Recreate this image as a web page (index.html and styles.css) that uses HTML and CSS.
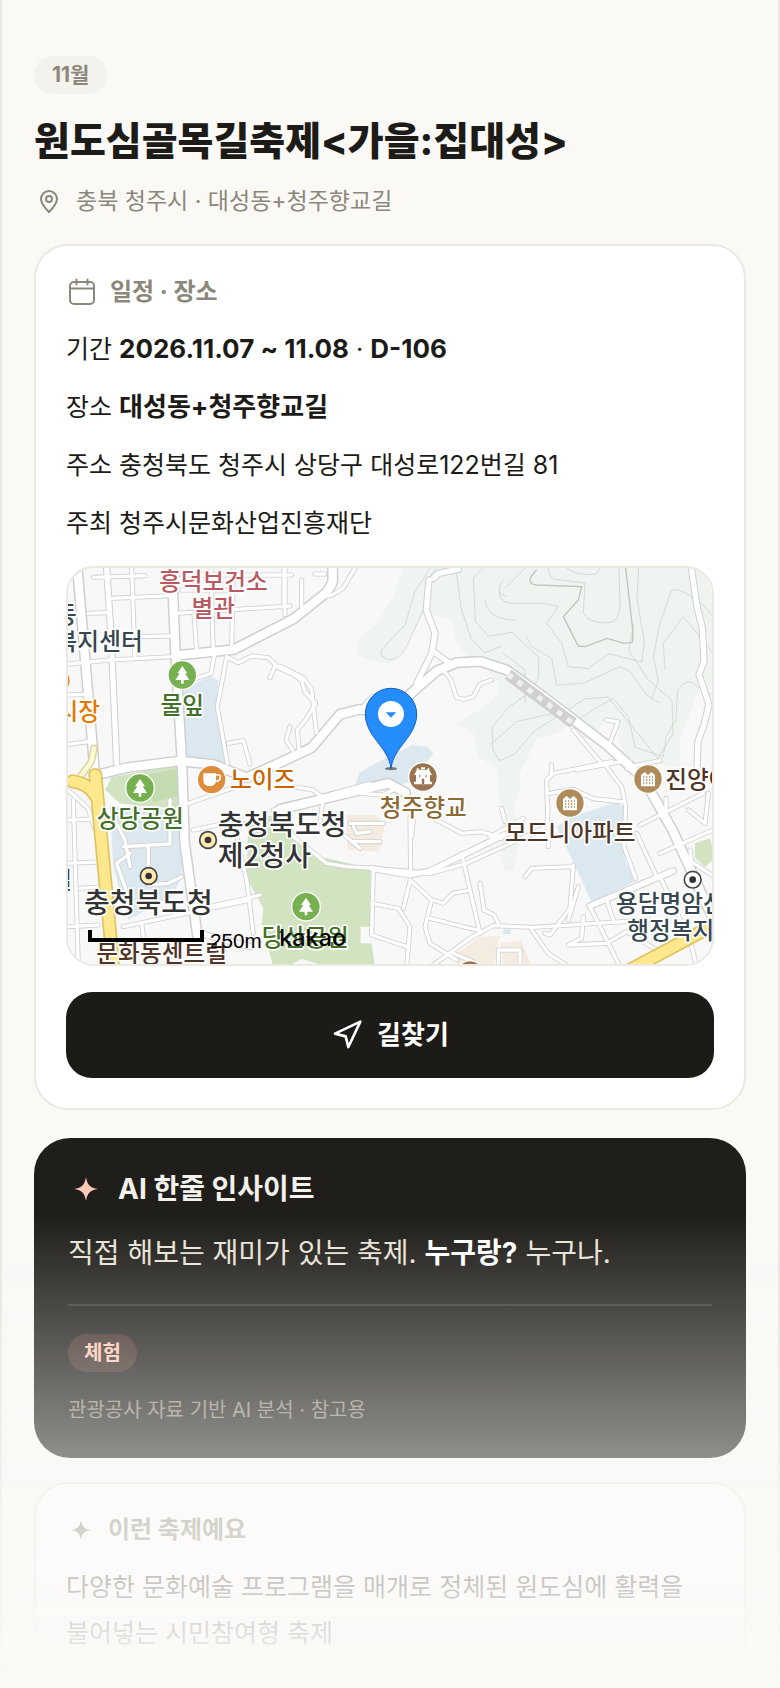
FILE: index.html
```html
<!DOCTYPE html>
<html lang="ko">
<head>
<meta charset="utf-8">
<meta name="viewport" content="width=device-width, initial-scale=1">
<title>원도심골목길축제&lt;가을:집대성&gt;</title>
<link rel="stylesheet" href="styles.css">
</head>
<body>
<main class="page">
  <header class="intro">
    <span class="month">11월</span>
    <h1 class="title">원도심골목길축제&lt;가을:집대성&gt;</h1>
    <p class="location">
      <svg class="icon-pin" viewBox="0 0 24 24" aria-hidden="true"><path d="M20 10c0 5-5 10-8 13-3-3-8-8-8-13a8 8 0 0 1 16 0z"/><circle cx="12" cy="10" r="3"/></svg>
      <span>충북 청주시 · 대성동+청주향교길</span>
    </p>
  </header>

  <section class="card">
    <h2 class="card-head">
      <svg class="icon-calendar" viewBox="0 0 28 28" aria-hidden="true"><rect x="2" y="4" width="24" height="22" rx="4"/><path d="M2 10.500h24M8.500 1.500v5M19.500 1.500v5"/></svg>
      <span>일정 · 장소</span>
    </h2>
    <div class="rows">
      <p>기간 <strong>2026.11.07 ~ 11.08</strong> · <strong>D-106</strong></p>
      <p>장소 <strong>대성동+청주향교길</strong></p>
      <p>주소 충청북도 청주시 상당구 대성로122번길 81</p>
      <p>주최 청주시문화산업진흥재단</p>
    </div>
    <div class="map">
      <svg class="map-svg" viewBox="24 24 1932 1188" role="img" aria-label="대성동+청주향교길 지도">
        <defs>
          <g id="minor">
            <path d="M215 24l10 270M100 52l155-5M155 115l180-8M85 160l60-2M245 230l85-2M24 312l125-12 190-10M24 405l50-2M24 553l60-8M350 160l340-22M402 160l8 115M455 24v110l5 140M520 24l-5 240M672 24v120M365 45h330M365 90h150"/>
            <path d="M465 275l-12 65-45 15M500 290l-28 150 30 170M500 290l35 18 40-20 50 5 30 30 40 18 30 20 10 35 32 34-30 50-25 30 5 60M660 318l70 35 25 35 14 130M645 318l-15 35M505 550l45-8 20 70M690 500l-12 40 20 30"/>
            <path d="M725 60v80M765 42h30M885 24l-35 60-35 22-15 2M675 24v140M900 450l35-40 60-16"/>
            <path d="M1295 360l-35 12-20 38-28 8-22-5-18-55-20-25"/>
            <path d="M1640 480l34 6-28 72M1540 510l80 95M1710 620l90-18M1550 630l150-28M1474 615v30"/>
            <path d="M1700 626l10-20M1465 860l-5-200 20-20 175-35M1470 700l70-12 60 28 90 10M1640 620l45 60 12 60-5 120 35 95M1818 715v50M1740 795l190-95M1945 700l-10 90-50-40M1800 880l170-75M1730 820l60 130M1890 870l5 35 60 40M1395 950l20-25 120-5M1540 915l-10 130-60 80-15-5"/>
            <path d="M1465 740l-5 60-240 110-110 30-170-15M1325 745l10 40M1050 770l2 170M1120 775l85 45 60-5 60 20M1290 830l100-55"/>
            <path d="M1205 880l55 240M1260 490M1050 960l65 60-20 80 15 50 80 50M1110 1075l60 15 80 20M1120 1020l30 10 28-30 45-8M1260 970l12 80 30 15 15 30"/>
            <path d="M940 925l-5 200 105 35M935 1030l80 15 35 55-10 120M1050 965l-20 80M1120 1215l110-80 70-38 120 5 350-22M1315 1215v-45h65v50M1415 1110l50 70 60 40M1240 1205l-60-25"/>
            <path d="M1590 1040l90 180M1595 1035l240-105M1640 1020l20 60M1570 1070l-5 65-40 20M1530 1155l110-5 60-35 90 55M1555 980l-30 100M1800 950l90 190 20 80"/>
            <path d="M385 730l145-50M400 810l240-50M640 750l290-80M24 690l60 55 20 60M24 780l80-3M40 720l15 500M24 910l110-5M60 985l80-5M24 1100l90-5M165 780l30 60 15 80M190 860l140-8V720M265 860v85M210 880l-40 30 35 100M365 950l-40 20-60 5M400 1050l160-35 40-10M190 1100l380-80M245 1090l10 80M530 830l30 130 20 160"/>
            <path d="M700 680l60 10 30 25-10 70M660 740l40 90 100 80 60 10 80 5M870 790h100M880 800l10 20 40-5M840 815l60 50M880 845h80M905 700l60 5 35-15M1060 780l-5 50"/>
          </g>
          <g id="middle">
            <path d="M140 24l14 220 16 366M1107 60l-8 90 26 70-10 60-45 90M1120 275l50 35M1120 55l15-15 60-12"/>
            <path d="M420 1120l150 40M935 925l115 20 60-12 225-110M1590 1038l250-105"/>
            <path d="M1894 24l18 120 15 60 5 100-15 40 30 90-15 60-18 50-3 80"/>
          </g>
          <g id="major">
            <path d="M52 24l24 280 28 330M338 80l8 190 20 340 8 240 40 290M345 287l175-18 180-92 100-80 18-30v-50"/>
            <path d="M110 645l90-22 160-20 100 10 100 40 100-45 95-45 85-100 60-15 100 10 50-55 80-70 60-25 70-4 80 26 110 80 190 145 110 100 90 160 100 220 70 140"/>
            <path d="M660 748l325-78 52 28"/>
          </g>
          <g id="tree"><path d="M0-27l-15 22h7l-13 20h17v11h8v-11h17l-13-20h7z"/></g>
          <g id="apartment"><path d="M-21 22v-34l11-9 10 9 10-9 11 9v34z"/><path class="windows" d="M-15-6h30M-15 3h30M-15 12h30"/></g>
          <g id="spot"><circle r="25"/><circle class="spot-dot" r="10"/></g>
        </defs>

        <rect class="ground" x="0" y="0" width="2000" height="1240"/>
        <path class="forest" d="M1030 24l-30 86-50 80-50 45-12 45 32 16 70 16 30-22 30-60 40-65h30l50 15 15 30 2 40 38 40 65 45 22 35v30l-22 25-40 30-60 35 50 30 15 70 55 35 5 75 15 60-10 130 15 45 25-5 25-110-25-70 22-70-2-40 10-20 40-85 60-15 50-30 20 50 50-20 30-45 30 5 10 80 20 45 160 15v-80l30-80 30-80 40 10V24z"/>
        <path class="contour" d="M1110 24l-45 70-30 100-70 75q-10 20 20 30 40 0 60-50l50-110 15-90 20-25M1188 24l15 120 30 90 40 45 50-20M1270 24l-30 30 6 130 40 45 70-12 80 75v60l-20 40-70 50-50 60 3 70 20 30 45-20 60-70 40-25 110-70 70-6 90 110 60 75 45-75-3-100-70-60-60-90 15-80M1275 120q10 60 90 60M1320 90q-10 30 30 40h100l45 10-35 50 45 60 20 70 60 6 60-45 100 25 8-60-22-130 5-90M1330 60q-30 40 10 50M1395 24l-60 60M1465 24q0 35 30 35l80 10-5 90q15 30 70 30 38 0 40-50l-3-115M1520 24q30 25 90 18l10-18M1720 560l90 30 8-60 30-50 5-90q30-45 60-10l55 30M1725 560l-20-90-45-55-70 40-30 20-60-20-130 30-80 70M1775 420l20-60-15-70 20-100 35-100q30-10 100 50l40 50M1815 330l-5-80 60-80 90 110M1400 230l15 30 60 35 15 80 80-5 110-50 30 15 50 70 40 25M1330 280l65 50v100"/>
        <path class="contour dark" d="M1430 30q-40 40 0 45l135 5-10 40-45 50 45 88 20 2 67-25 50 15 25-3 2-30-22-195"/>
        <path class="park" d="M135 690l20-38 200-38 3 130-98-4-80-10zM565 770l80-5 70 75 60 50 50 10 107 25v200l12 95H640l-35-125 5-50-50-90zM1905 850l45-15 15 60-30 25-30-25z"/>
        <path class="park-shade" d="M250 645l105-18v80l-75 20z"/>
        <path class="ground" d="M902 1100h40v50h-40zM690 1215l35-18 60 18z"/>
        <path class="water" d="M370 390l80-42 25 12-5 80 30 175-120-15zM150 740l220 10-5 200-30 60-130 70-45-160zM885 680l12-42 60-33 100-50 45 5 18 20-17 22-30 20-5 40-80 18zM1490 800l50-30 130-45 20 15 5 160 30 65-130 60zM1330 1108h22v14h-22z"/>
        <path class="building" d="M860 765h85l30 28-18 82-95-5zM1190 1180l70-50 60-2-10 40-10 50h-110zM1320 1148l65-5 30 75h-85z"/>

        <use class="road-edge minor" href="#minor"/>
        <use class="road-edge middle" href="#middle"/>
        <use class="road-edge major" href="#major"/>
        <use class="road minor" href="#minor"/>
        <use class="road middle" href="#middle"/>
        <use class="road major" href="#major"/>
        <path class="tunnel" d="M1344 343l196 147"/>
        <path class="tunnel-dash" d="M1344 343l196 147"/>

        <path class="pale-edge" d="M102 565l-8 40-40 55-30 5"/>
        <path class="pale" d="M102 565l-8 40-40 55-30 5"/>
        <path class="yellow-edge" d="M38 664q50 8 70 45M106 645l56 600M1700 1235l280-150"/>
        <path class="yellow" d="M38 664q50 8 70 45M106 645l56 600M1700 1235l280-150"/>

        <g class="poi">
          <circle class="green" cx="367" cy="345" r="43"/><use href="#tree" x="367" y="345"/>
          <circle class="green" cx="240" cy="684" r="43"/><use href="#tree" x="240" y="684"/>
          <circle class="green" cx="738" cy="1040" r="43"/><use href="#tree" x="738" y="1040"/>
          <circle class="orange" cx="455" cy="659" r="43"/>
          <path d="M430 640h38v20q0 18-19 18t-19-18z"/><path class="cup-handle" d="M467 645q16-3 14 8-2 12-15 11"/>
          <circle class="orange" cx="-12" cy="363" r="43"/>
          <circle class="brown" cx="1089" cy="651" r="43"/>
          <path d="M1070 631v-6h6v4h26v-4h6v6l8 14h-6v20h6v8h-54v-8h6v-20h-6zM1083 622h12v6h-12z"/>
          <path class="door" d="M1089 656v16M1078 648h3M1097 648h3"/>
          <circle class="tan" cx="1530" cy="729" r="43"/><use href="#apartment" x="1530" y="729"/>
          <circle class="tan" cx="1764" cy="657" r="43"/><use href="#apartment" x="1764" y="657"/>
          <circle class="brown" cx="1230" cy="1245" r="43"/>
        </g>
        <g class="spots">
          <use href="#spot" x="266" y="948"/><use href="#spot" x="444" y="840"/>
          <use class="spot-plain" href="#spot" x="1898" y="959"/>
        </g>

        <g class="label">
          <text class="red" x="460" y="91" text-anchor="middle">흥덕보건소</text>
          <text class="red" x="460" y="172" text-anchor="middle">별관</text>
          <text class="slate" x="50" y="189" text-anchor="end">동</text>
          <text class="slate" x="248" y="271" text-anchor="end">복지센터</text>
          <text class="amber" x="120" y="481" text-anchor="end">시장</text>
          <text class="leaf" x="367" y="463" text-anchor="middle">물잎</text>
          <text class="leaf" x="241" y="802" text-anchor="middle">상당공원</text>
          <text class="leaf" x="736" y="1158" text-anchor="middle">당산공원</text>
          <text class="coffee" x="510" y="685">노이즈</text>
          <text class="heritage" x="1090" y="768" text-anchor="middle">청주향교</text>
          <text class="cocoa" x="1531" y="844" text-anchor="middle">모드니아파트</text>
          <text class="cocoa" x="1816" y="684">진양아파트</text>
          <text class="cocoa" x="305" y="1205" text-anchor="middle">문화동센트럴</text>
          <text class="slate" x="1668" y="1057">용담명암산성동</text>
          <text class="slate" x="1702" y="1137">행정복지센터</text>
          <text class="slate" x="36" y="987" text-anchor="end">길</text>
          <text class="place" x="265" y="1058" text-anchor="middle">충청북도청</text>
          <text class="place" x="473" y="826">충청북도청</text>
          <text class="place" x="473" y="919">제2청사</text>
        </g>
        <path class="scale-bar" d="M90 1110v30h336v-30"/>
        <text class="scale-text" x="450" y="1163">250m</text>
        <text class="brand" x="658" y="1157">kakao</text>

        <ellipse class="pin-shadow" cx="993" cy="626" rx="18" ry="5"/>
        <path class="pin" d="M993 625C985 560 916 530 916 462a77 77 0 0 1 154 0C1070 530 1001 560 993 625z"/>
        <circle class="pin-eye" cx="993" cy="462" r="39"/>
        <path class="pin-arrow" d="M977 457h32l-16 16z"/>
      </svg>
    </div>
    <button class="route" type="button">
      <svg class="icon-nav" viewBox="0 0 24 24" aria-hidden="true"><path d="M3 11l19-9-9 19-2-8z"/></svg>
      <span>길찾기</span>
    </button>
  </section>

  <section class="insight">
    <h2 class="insight-head">
      <svg class="icon-star" viewBox="0 0 24 24" aria-hidden="true"><path d="M12 0c1.300 8 4 10.700 12 12-8 1.300-10.700 4-12 12-1.300-8-4-10.700-12-12 8-1.300 10.700-4 12-12z"/></svg>
      <span>AI 한줄 인사이트</span>
    </h2>
    <p class="insight-text">직접 해보는 재미가 있는 축제. <strong>누구랑?</strong> 누구나.</p>
    <hr class="divider">
    <span class="tag">체험</span>
    <p class="source">관광공사 자료 기반 AI 분석 · 참고용</p>
  </section>

  <section class="card">
    <h2 class="card-head">
      <svg class="icon-star small" viewBox="0 0 24 24" aria-hidden="true"><path d="M12 0c1.300 8 4 10.700 12 12-8 1.300-10.700 4-12 12-1.300-8-4-10.700-12-12 8-1.300 10.700-4 12-12z"/></svg>
      <span>이런 축제예요</span>
    </h2>
    <p class="about">다양한 문화예술 프로그램을 매개로 정체된 원도심에 활력을 불어넣는 시민참여형 축제</p>
  </section>
</main>
<div class="fade" aria-hidden="true"></div>
</body>
</html>
```
FILE: styles.css
```css
* { box-sizing: border-box; }
body {
  margin: 0;
  background: #faf9f6;
  color: #1d1b17;
  font-family: Inter, "Noto Sans CJK KR", sans-serif;
  font-size: 25px;
  word-break: keep-all;
}
h1, h2, p { margin: 0; }
strong { font-weight: 700; }
.page {
  min-height: 100vh;
  padding: 56px 32px 0;
  border: solid #e9e7df;
  border-width: 0 2px;
}
.intro { display: flex; flex-direction: column; align-items: flex-start; }
.month, .tag {
  display: block;
  width: fit-content;
  height: 38px;
  border-radius: 19px;
  font-size: 20px;
  line-height: 38px;
}
.month { padding: 0 18px; background: #f3f2ed; color: #8c877b; font-size: 21px; font-weight: 700; }
.title { margin-top: 22px; font-size: 39px; line-height: 50px; font-weight: 800; }
.location {
  display: flex;
  align-items: center;
  gap: 15px;
  margin: 17px 0 25px;
  padding-left: 3px;
  color: #8c877b;
  font-size: 23px;
  line-height: 36px;
}
svg { display: block; flex: none; }
.icon-pin, .icon-calendar, .icon-nav {
  fill: none;
  stroke: currentColor;
  stroke-width: 2;
  stroke-linecap: round;
  stroke-linejoin: round;
}
.icon-pin { width: 24px; height: 24px; }
.icon-calendar { width: 28px; height: 28px; margin: 0 2px; }
.icon-nav { width: 32px; height: 32px; }
.icon-star { width: 24px; height: 24px; margin: 0 6px; fill: #ffc9b8; }
.icon-star.small { width: 20px; height: 20px; margin: 0 5px; fill: #8c877b; }

.card {
  padding: 30px;
  border: 2px solid #ebe9e2;
  border-radius: 34px;
  background: #fff;
}
.card-head {
  display: flex;
  align-items: center;
  gap: 12px;
  color: #8c877b;
  font-size: 24px;
  line-height: 32px;
  font-weight: 700;
}
.rows { display: flex; flex-direction: column; gap: 16px; margin-top: 20px; line-height: 42px; }
.rows strong { font-size: 26px; }
.map {
  margin: 22px 0 26px;
  overflow: hidden;
  border: 2px solid #ebe9e2;
  border-radius: 28px;
}
.route {
  display: flex;
  align-items: center;
  justify-content: center;
  gap: 14px;
  width: 100%;
  height: 86px;
  padding: 0;
  border: 0;
  border-radius: 26px;
  background: #1d1b17;
  color: #fff;
  font: inherit;
  font-size: 26px;
  line-height: 32px;
  font-weight: 700;
}
.insight {
  margin: 28px 0 24px;
  padding: 34px;
  border-radius: 36px;
  background: #201e1a;
}
.insight-head {
  display: flex;
  align-items: center;
  gap: 14px;
  color: #f3f1ec;
  font-size: 28px;
  line-height: 34px;
  font-weight: 700;
}
.insight-text { margin-top: 26px; color: #e8e3d8; font-size: 28px; line-height: 42px; }
.insight-text strong { color: #fff; }
.divider { height: 2px; margin: 30px 0 28px; border: 0; background: #3a3833; }
.tag { padding: 0 16px; background: #42302a; color: #ffc9b8; font-weight: 700; }
.source { margin-top: 24px; color: #8c877b; font-size: 20px; line-height: 28px; }
.about { margin-top: 18px; line-height: 46px; }
.fade {
  position: fixed;
  inset: auto 0 0;
  height: 474px;
  background: linear-gradient(rgba(250, 249, 246, 0), #faf9f6);
  pointer-events: none;
}

.map-svg { width: 100%; height: auto; }
.ground { fill: #f8f8f8; }
.forest { fill: #eff4f1; }
.contour { fill: none; stroke: #d5d9d4; stroke-width: 3; }
.contour.dark { stroke: #bfc4b8; stroke-width: 4; }
.park { fill: #d2e3c2; }
.park-shade { fill: #c4dbb0; }
.water { fill: #dce8f0; }
.building { fill: #f4ece1; }
.road, .road-edge, .tunnel, .tunnel-dash, .pale, .pale-edge, .yellow, .yellow-edge {
  fill: none;
  stroke-linecap: round;
  stroke-linejoin: round;
}
.road { stroke: #fff; }
.road-edge { stroke: #cfcfcf; }
.road.minor { stroke-width: 10; }
.road-edge.minor { stroke-width: 15; }
.road.middle { stroke-width: 16; }
.road-edge.middle { stroke-width: 22; }
.road.major { stroke-width: 25; }
.road-edge.major { stroke-width: 34; }
.tunnel { stroke: #d0d0d0; stroke-width: 34; stroke-linecap: butt; }
.tunnel-dash { stroke: #f0f0f0; stroke-width: 16; stroke-linecap: butt; stroke-dasharray: 17 20; }
.pale-edge { stroke: #d8d2a8; stroke-width: 22; }
.pale { stroke: #fffbd0; stroke-width: 14; }
.yellow-edge { stroke: #dcc463; stroke-width: 42; }
.yellow { stroke: #ffe88c; stroke-width: 32; }
.poi { fill: #fff; }
.poi circle { stroke: #fff; stroke-width: 4; }
.poi .green { fill: #76b04f; }
.poi .orange { fill: #dc8c3a; }
.poi .brown { fill: #9c7350; }
.poi .tan { fill: #ae8b58; }
.cup-handle { fill: none; stroke: #fff; stroke-width: 5; }
.door { stroke: #9c7350; stroke-width: 7; }
.windows { fill: none; stroke: #ae8b58; stroke-width: 4; stroke-dasharray: 4 5; }
.spots { fill: #ffe9b0; stroke: #444; stroke-width: 5; }
.spot-plain { fill: #fff; }
.spot-dot { fill: #333; stroke: none; }
.label {
  font-family: "Noto Sans CJK KR", sans-serif;
  font-size: 71px;
  font-weight: 500;
  stroke: #fff;
  stroke-width: 10;
  stroke-linejoin: round;
  paint-order: stroke;
}
.red { fill: #b85a5f; }
.slate { fill: #37474f; }
.amber { fill: #e67700; }
.leaf { fill: #44702a; }
.coffee { fill: #c86400; }
.heritage { fill: #8a6a35; }
.cocoa { fill: #4f3527; }
.place { fill: #333; font-size: 84px; }
.scale-bar { fill: none; stroke: #000; stroke-width: 12; }
.scale-text { font-family: "Liberation Sans", sans-serif; font-size: 62px; font-weight: 400; }
.brand { font-family: Inter, sans-serif; font-size: 70px; font-weight: 500; }
.pin { fill: #258cfc; stroke: #1b5fc4; stroke-width: 3; }
.pin-eye { fill: #fff; }
.pin-arrow { fill: #258cfc; }
.pin-shadow { fill: #6d7880; }
```
